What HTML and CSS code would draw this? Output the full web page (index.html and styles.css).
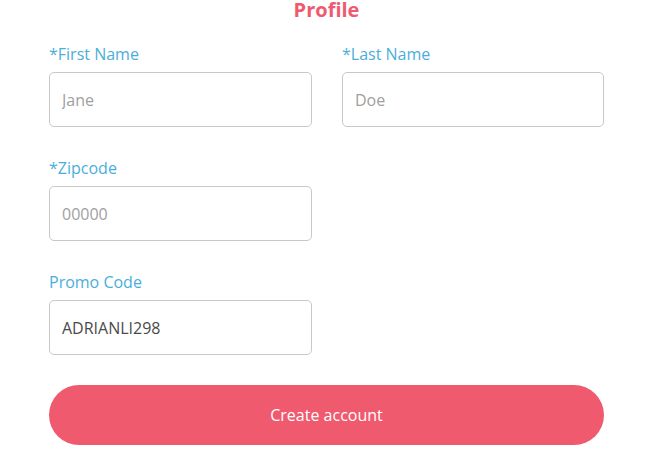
FILE: index.html
```html
<!DOCTYPE html>
<html lang="en">
<head>
<meta charset="utf-8">
<title>Profile</title>
<link rel="stylesheet" href="styles.css">
</head>
<body>
<form class="profile">
  <h1 class="profile__title">Profile</h1>
  <div class="profile__grid">
    <label class="field">
      <span class="field__label">*First Name</span>
      <input class="field__input" type="text" placeholder="Jane">
    </label>
    <label class="field">
      <span class="field__label">*Last Name</span>
      <input class="field__input" type="text" placeholder="Doe">
    </label>
    <label class="field">
      <span class="field__label">*Zipcode</span>
      <input class="field__input" type="text" placeholder="00000">
    </label>
    <div></div>
    <label class="field">
      <span class="field__label">Promo Code</span>
      <input class="field__input" type="text" value="ADRIANLI298">
    </label>
  </div>
  <button class="profile__submit" type="button">Create account</button>
</form>
</body>
</html>
```
FILE: styles.css
```css
html, body {
  margin: 0;
  padding: 0;
  background: #ffffff;
}
body {
  font-family: "Open Sans", "Liberation Sans", sans-serif;
}
.profile {
  width: 555px;
  margin: 0 0 0 49px;
  display: flex;
  flex-direction: column;
}
.profile__title {
  margin: 0;
  font-size: 20px;
  line-height: 20px;
  font-weight: 700;
  color: #ef5a6e;
  text-align: center;
}
.profile__grid {
  display: grid;
  grid-template-columns: 263px 262px;
  column-gap: 30px;
  row-gap: 30px;
  margin-top: 23px;
}
.field {
  display: flex;
  flex-direction: column;
  gap: 7px;
}
.field__label {
  font-size: 16px;
  line-height: 22px;
  color: #4aaedc;
}
.field__input {
  box-sizing: border-box;
  height: 55px;
  width: 100%;
  border: 1px solid #c8c8c8;
  border-radius: 5px;
  padding: 0 12px;
  font-family: inherit;
  font-size: 16px;
  color: #4a4a4a;
  outline: none;
}
.field__input::placeholder {
  color: #a0a0a0;
}
.profile__submit {
  margin-top: 30px;
  height: 60px;
  border: none;
  border-radius: 30px;
  background: #ef5a6e;
  color: #ffffff;
  font-family: inherit;
  font-size: 16px;
  cursor: pointer;
}
```
